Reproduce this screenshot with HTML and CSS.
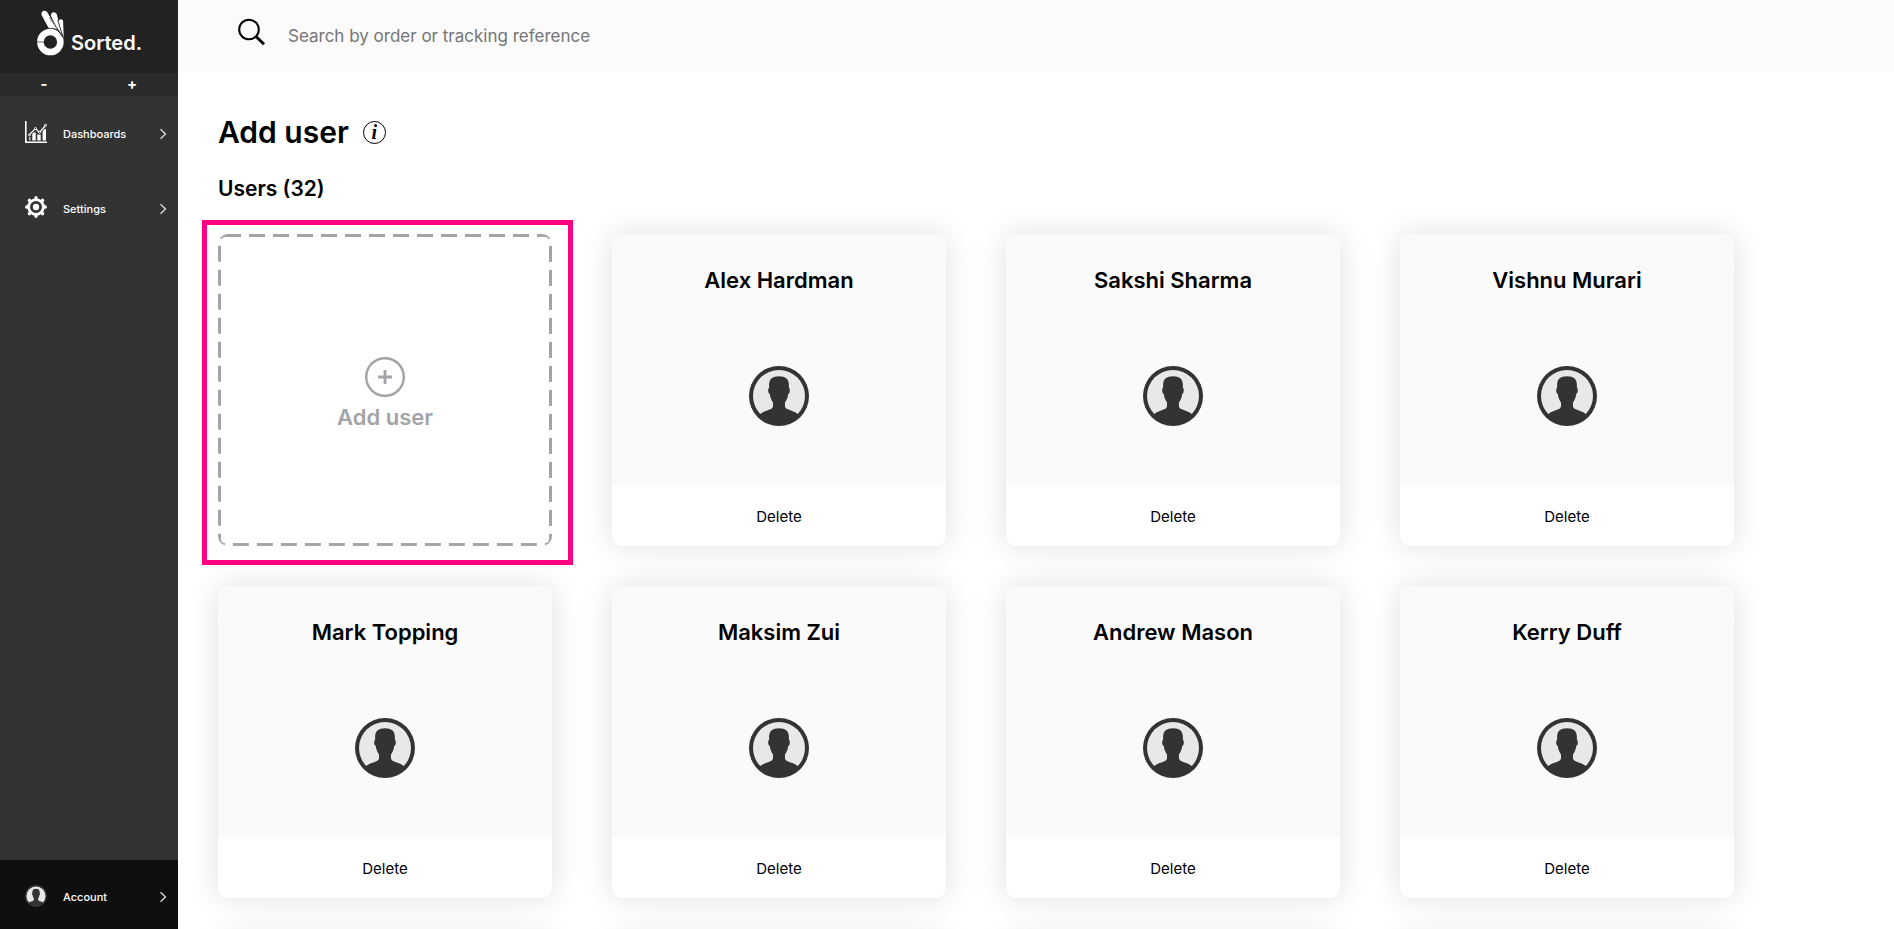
FILE: index.html
```html
<!DOCTYPE html>
<html lang="en">
<head>
<meta charset="utf-8">
<title>Add user</title>
<link rel="stylesheet" href="styles.css">
</head>
<body>
<svg class="defs" aria-hidden="true">
  <symbol id="avatar" viewBox="0 0 60 60">
    <circle cx="30" cy="30" r="30" fill="#333"/>
    <circle cx="30" cy="30" r="26" fill="#e8e8e8"/>
    <path fill="#333" d="M30 10.300C36.500 10.300 39.800 13 39.900 19V22C41.200 22 41.200 27.500 39.300 27.800C38.800 31.500 37.500 34.500 36 36.500C35.800 40.500 36 42 38 43C41.500 44.500 46 45.500 49.500 48.500L44 54L30 58L16 54L10.500 48.500C14 45.500 18.500 44.500 22 43C24 42 24.200 40.500 24 36.500C22.500 34.500 21.200 31.500 20.700 27.800C18.800 27.500 18.800 22 20.100 22V19C20.200 13 23.500 10.300 30 10.300Z"/>
  </symbol>
  <symbol id="chevron" viewBox="0 0 8 12">
    <path d="M1.500 1.200 6.500 6l-5 4.800" fill="none" stroke="#ddd" stroke-width="1.300"/>
  </symbol>
</svg>
<div class="app">
  <aside class="sidebar">
    <a class="logo" href="#" aria-label="Sorted.">
      <svg class="logo-mark" viewBox="0 0 28 46" aria-hidden="true">
        <g fill="#fff">
          <path d="M4.800 5.500C3.200 1 8.500-1 10.700 3L21 20C18 18.500 15.500 18.300 12 18.800Z"/>
          <path d="M14 6C13.200 1.200 19.200 1 20 5L24.500 24L19.500 17Z"/>
          <path d="M21.800 11.500C21.800 8.500 26 8.500 26.100 11.500L26.800 28L24.500 23Z"/>
        </g>
        <circle cx="13.400" cy="32" r="10" fill="none" stroke="#fff" stroke-width="6.600"/>
        <path d="M11 18.400C17.500 17.600 20.500 19.800 23 23L26.600 28M12.500 7.500 25.500 27M20.600 10l5.600 17M0 32h7" fill="none" stroke="#222" stroke-width=".7"/>
      </svg>
      <span class="logo-name">Sorted.</span>
    </a>
    <div class="text-size">
      <button type="button" aria-label="Smaller">-</button>
      <button type="button" aria-label="Larger">+</button>
    </div>
    <nav class="nav">
      <a class="nav-item" href="#">
        <svg class="nav-icon" viewBox="0 0 22 22" aria-hidden="true">
          <path d="M.8 0v21.200H22" fill="none" stroke="#fff" stroke-width="1.600"/>
          <path d="M9 19.500v-8M14 19.500v-6M19.300 19.500V8" stroke="#fff" stroke-width="3.400"/>
          <path d="M4.800 19.500v-3.500" stroke="#fff" stroke-width="1"/>
          <path d="m4.500 13.500 6-6 4 4 6-7" fill="none" stroke="#333" stroke-width="3"/>
          <path d="m4.500 13.500 6-6 4 4 6-7" fill="none" stroke="#fff" stroke-width="1.200"/>
          <g fill="#333" stroke="#fff"><circle cx="4.500" cy="13.800" r="1"/><circle cx="10.500" cy="7.500" r="1"/><circle cx="14.500" cy="11.300" r="1"/><circle cx="20.500" cy="4.300" r="1"/></g>
        </svg>
        <span class="nav-label">Dashboards</span>
        <svg class="chevron" aria-hidden="true"><use href="#chevron"/></svg>
      </a>
      <a class="nav-item" href="#">
        <svg class="nav-icon" viewBox="0 0 22 22" aria-hidden="true">
          <circle cx="11" cy="11" r="7.400" fill="none" stroke="#fff" stroke-width="2.800"/>
          <circle cx="11" cy="11" r="3.200" fill="#fff"/>
          <g stroke="#fff" stroke-width="3.400" stroke-linecap="round">
            <path d="M11 1.700v1M11 19.300v1M1.700 11h1M19.300 11h1M4.400 4.400l.7.700M16.900 16.900l.7.700M17.600 4.400l-.7.700M5.100 16.900l-.7.700"/>
          </g>
        </svg>
        <span class="nav-label">Settings</span>
        <svg class="chevron" aria-hidden="true"><use href="#chevron"/></svg>
      </a>
    </nav>
    <a class="nav-item account" href="#">
      <svg class="nav-icon" aria-hidden="true"><use href="#avatar"/></svg>
      <span class="nav-label">Account</span>
      <svg class="chevron" aria-hidden="true"><use href="#chevron"/></svg>
    </a>
  </aside>
  <div class="page">
    <header class="search">
      <label for="search" aria-label="Search">
        <svg class="search-icon" viewBox="0 0 28 28" aria-hidden="true">
          <circle cx="11" cy="11.500" r="9.800" fill="none" stroke="#000" stroke-width="2"/>
          <path d="m18 18.500 8 7.800" stroke="#000" stroke-width="3"/>
        </svg>
      </label>
      <input id="search" type="text" placeholder="Search by order or tracking reference">
    </header>
    <main class="main">
      <div class="title">
        <h1>Add user</h1>
        <button class="info" type="button" aria-label="Information">i</button>
      </div>
      <h2 class="count">Users (32)</h2>
      <div class="cards">
        <div class="add-slot">
          <button class="add-card" type="button">
            <svg class="dashes" aria-hidden="true"><rect width="100%" height="100%" rx="7" fill="none" stroke="#a3a4a8" stroke-width="6" stroke-dasharray="16 8"/></svg>
            <svg class="plus" viewBox="0 0 40 40" aria-hidden="true"><circle cx="20" cy="20" r="18.800" fill="none" stroke="#a3a4a8" stroke-width="2.400"/><path d="M20 13v14M13 20h14" stroke="#a3a4a8" stroke-width="2.800"/></svg>
            <span>Add user</span>
          </button>
          <div class="highlight"></div>
        </div>
        <article class="card"><div class="card-body"><h3>Alex Hardman</h3><svg class="avatar" aria-hidden="true"><use href="#avatar"/></svg></div><button class="delete" type="button">Delete</button></article>
        <article class="card"><div class="card-body"><h3>Sakshi Sharma</h3><svg class="avatar" aria-hidden="true"><use href="#avatar"/></svg></div><button class="delete" type="button">Delete</button></article>
        <article class="card"><div class="card-body"><h3>Vishnu Murari</h3><svg class="avatar" aria-hidden="true"><use href="#avatar"/></svg></div><button class="delete" type="button">Delete</button></article>
        <article class="card"><div class="card-body"><h3>Mark Topping</h3><svg class="avatar" aria-hidden="true"><use href="#avatar"/></svg></div><button class="delete" type="button">Delete</button></article>
        <article class="card"><div class="card-body"><h3>Maksim Zui</h3><svg class="avatar" aria-hidden="true"><use href="#avatar"/></svg></div><button class="delete" type="button">Delete</button></article>
        <article class="card"><div class="card-body"><h3>Andrew Mason</h3><svg class="avatar" aria-hidden="true"><use href="#avatar"/></svg></div><button class="delete" type="button">Delete</button></article>
        <article class="card"><div class="card-body"><h3>Kerry Duff</h3><svg class="avatar" aria-hidden="true"><use href="#avatar"/></svg></div><button class="delete" type="button">Delete</button></article>
        <article class="card"></article>
        <article class="card"></article>
        <article class="card"></article>
        <article class="card"></article>
      </div>
    </main>
  </div>
</div>
</body>
</html>
```
FILE: styles.css
```css
* { box-sizing: border-box; }
body {
  margin: 0;
  font-family: Inter, "Liberation Sans", sans-serif;
  color: #000;
  background: #fff;
}
button { font: inherit; color: inherit; border: 0; padding: 0; background: none; cursor: pointer; }
a { color: inherit; text-decoration: none; }
h1, h2, h3 { margin: 0; font-weight: 600; }
.defs { display: none; }
.app { display: flex; height: 100vh; overflow: hidden; }

.sidebar { display: flex; flex-direction: column; flex: none; width: 178px; background: #333; color: #fff; }
.logo { display: flex; align-items: flex-end; gap: 6px; height: 73px; padding: 0 0 17px 37px; background: #222; }
.logo-mark { width: 28px; height: 46px; }
.logo-name { padding-bottom: 1px; font-size: 20px; line-height: 24px; font-weight: 600; }
.text-size { display: grid; grid-template-columns: 1fr 1fr; height: 23px; padding: 0 2px 2px 0; background: #2a2a2a; font-size: 15px; line-height: 21px; font-weight: 700; }
.nav { flex: 1; }
.nav-item { display: flex; align-items: center; height: 75px; padding: 0 11px 0 25px; font-size: 11px; font-weight: 500; }
.nav-icon { width: 22px; height: 22px; margin: 0 16px 3px 0; }
.nav-label { flex: 1; }
.chevron { width: 8px; height: 12px; }
.account { height: 69px; padding-top: 5px; background: #0f0f0f; }

.page { flex: 1; min-width: 0; }
.search { display: flex; align-items: center; gap: 22px; height: 72px; padding: 0 60px; background: #fbfbfb; }
.search label { display: flex; }
.search-icon { width: 28px; height: 28px; margin-bottom: 8px; }
.search input { flex: 1; border: 0; padding: 0; outline: 0; background: none; font: inherit; font-size: 17px; }
.search input::placeholder { color: #757575; opacity: 1; }

.main { padding: 40px 160px 40px 40px; }
.title { display: flex; align-items: center; gap: 14px; }
h1 { font-size: 30px; line-height: 40px; }
.info { width: 23px; height: 23px; border: 1px solid #000; border-radius: 50%; font: italic bold 20px/20px "Liberation Serif", serif; }
.count { margin: 23px 0 31px; font-size: 21px; line-height: 28px; }

.cards { display: grid; grid-template-columns: repeat(4, 1fr); gap: 40px 60px; }
.card { display: flex; flex-direction: column; min-height: 312px; border-radius: 10px; background: #fff; box-shadow: 0 0 30px rgba(0, 0, 0, .13); overflow: hidden; }
.card-body { display: flex; flex-direction: column; align-items: center; flex: 1; gap: 70px; padding-top: 30px; background: #fafafa; }
h3 { font-size: 22px; line-height: 32px; }
.avatar { width: 60px; height: 60px; }
.delete { height: 61px; padding-top: 2px; font-size: 15px; }

.add-slot { position: relative; display: flex; }
.add-card { position: relative; display: flex; flex: 1; flex-direction: column; align-items: center; justify-content: center; gap: 4px; padding-top: 10px; color: #a3a4a8; font-size: 22px; line-height: 32px; font-weight: 600; }
.dashes { position: absolute; inset: 0; width: 100%; height: 100%; border-radius: 10px; overflow: hidden; }
.plus { width: 40px; height: 40px; }
.highlight { position: absolute; inset: -14px -21px -19px -16px; border: 5px solid #ff0080; pointer-events: none; }
```
